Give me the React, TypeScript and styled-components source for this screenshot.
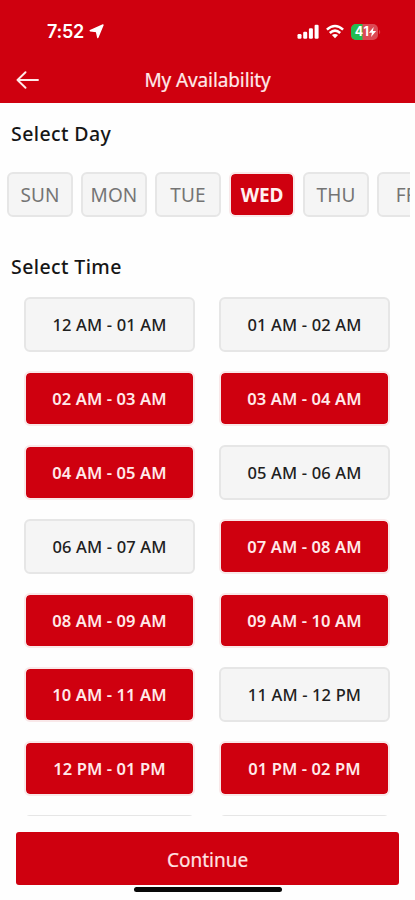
import React, { useState } from "react";
import styled, { createGlobalStyle } from "styled-components";

const RED = "#cf000f";

const GlobalStyle = createGlobalStyle`
  *, *::before, *::after { box-sizing: border-box; }
  body { margin: 0; background: #fff; }
  button { font: inherit; padding: 0; cursor: pointer; }
`;

const Screen = styled.div`
  display: flex;
  flex-direction: column;
  height: 900px;
  overflow: hidden;
  background: #fefefe;
  color: #161616;
  font-family: "Noto Sans", "Open Sans", sans-serif;
`;

const Header = styled.header`
  flex: none;
  height: 103px;
  background: ${RED};
  color: #fff;
`;

const StatusBar = styled.div`
  display: flex;
  justify-content: space-between;
  align-items: center;
  height: 57px;
  padding: 6px 34px 0 47px;
`;

const Clock = styled.div`
  display: flex;
  align-items: center;
  gap: 5px;
  font: 600 18px/20px Inter, sans-serif;
  letter-spacing: -0.25px;
`;

const StatusIcons = styled.div`
  display: flex;
  align-items: center;
  gap: 7px;
`;

const TitleBar = styled.div`
  display: grid;
  grid-template-columns: 40px 1fr 40px;
  align-items: center;
  height: 46px;
`;

const BackButton = styled.button`
  display: flex;
  justify-content: flex-start;
  padding-left: 16px;
  border: 0;
  background: none;
  color: #fff;
`;

const Title = styled.h1`
  margin: 0;
  font-size: 19px;
  line-height: 26px;
  font-weight: 400;
  letter-spacing: -0.1px;
  text-align: center;
  color: #ffe9e9;
  -webkit-text-stroke: 0.2px;
`;

const SectionTitle = styled.h2<{ $height: number; $offset?: number }>`
  flex: none;
  margin: 0;
  padding: ${(p) => p.$offset ?? 0}px 0 0 11px;
  height: ${(p) => p.$height}px;
  line-height: 62px;
  font-size: 19.5px;
  font-weight: 500;
  letter-spacing: 0.4px;
`;

const DayStrip = styled.div`
  flex: none;
  display: flex;
  gap: 8px;
  margin-right: 5px;
  padding-left: 7px;
  height: 45px;
  overflow: hidden;
`;

const Choice = styled.button<{ $active?: boolean }>`
  border: 2px solid ${(p) => (p.$active ? "#f9e8e9" : "#e6e6e6")};
  border-radius: 6px;
  background: ${(p) => (p.$active ? RED : "#f5f5f5")};
  background-clip: ${(p) => (p.$active ? "padding-box" : "border-box")};
`;

const DayButton = styled(Choice)`
  flex: none;
  width: 66px;
  height: 45px;
  font-size: 19px;
  font-weight: ${(p) => (p.$active ? 700 : 400)};
  letter-spacing: ${(p) => (p.$active ? "-0.2px" : "0.1px")};
  color: ${(p) => (p.$active ? "#fff0f0" : "#747474")};
`;

const SlotGrid = styled.div`
  flex: none;
  display: grid;
  grid-template-columns: 171px 171px;
  grid-auto-rows: 55px;
  column-gap: 24px;
  row-gap: 19px;
  height: 519px;
  padding-left: 24px;
  overflow: hidden;
`;

const SlotButton = styled(Choice)`
  font-size: 16.5px;
  font-weight: ${(p) => (p.$active ? 600 : 500)};
  letter-spacing: ${(p) => (p.$active ? "0.1px" : "0.15px")};
  color: ${(p) => (p.$active ? "#ffe9e9" : "#202020")};
`;

const Footer = styled.footer`
  display: flex;
  flex-direction: column;
  align-items: center;
  padding: 16px 16px 0;
`;

const ContinueButton = styled.button`
  width: 100%;
  height: 53px;
  padding-top: 2px;
  border: 0;
  border-radius: 3px;
  background: ${RED};
  color: #ffe3e3;
  font-size: 19px;
  font-weight: 400;
  -webkit-text-stroke: 0.2px;
`;

const HomeIndicator = styled.div`
  width: 148px;
  height: 5px;
  margin-top: 2px;
  border-radius: 3px;
  background: #080808;
`;

const LocationIcon = () => (
  <svg width="15" height="15" viewBox="0 0 15 15" aria-hidden="true">
    <path d="M14 1 8.8 13.6 7.5 7.5 1.2 6.7Z" fill="#fff" stroke="#fff" strokeWidth="1.4" strokeLinejoin="round" />
  </svg>
);

const BackIcon = () => (
  <svg width="24" height="18" viewBox="0 0 24 18" fill="none" stroke="#ffe9e9" strokeWidth="1.9" strokeLinecap="round" strokeLinejoin="round" aria-hidden="true">
    <path d="M22 9H1.5M9.5 1.2 1.5 9l8 7.8" />
  </svg>
);

const SignalIcon = () => (
  <svg width="22" height="15" viewBox="0 0 22 15" fill="#fff" aria-hidden="true">
    <rect x="0.5" y="10" width="4" height="4.7" rx="1.2" />
    <rect x="6.2" y="7.8" width="4" height="6.9" rx="1.2" />
    <rect x="11.9" y="4.3" width="4" height="10.4" rx="1.2" />
    <rect x="17.6" y="0.8" width="4" height="13.9" rx="1.2" />
  </svg>
);

const WifiIcon = () => (
  <svg width="18" height="15" viewBox="0 0 18 15" aria-hidden="true">
    <g fill="none" stroke="#fff" strokeWidth="2.5">
      <path d="M.9 5.7Q9-1.8 17.1 5.7" />
      <path d="M3.8 9Q9 4.2 14.2 9" />
    </g>
    <path d="M9 14.2 5.9 11.1Q9 8.9 12.1 11.1Z" fill="#fff" />
  </svg>
);

const BatteryIcon = () => (
  <svg width="30" height="16" viewBox="0 0 30 16" aria-label="41 percent, charging">
    <rect width="27" height="16" rx="5" fill="#dc4a54" />
    <path d="M5 0h6.5v16H5a5 5 0 0 1-5-5V5a5 5 0 0 1 5-5Z" fill="#22bd51" />
    <path d="M28.2 5.7q2 2.3 0 4.6Z" fill="#dc4a54" />
    <text x="3.8" y="12.4" fill="#fff" fontFamily="Inter, sans-serif" fontSize="12.5" fontWeight="700" textLength="14">41</text>
    <path d="m22.7 3-4.8 5.8h3l-.8 4.2 5-6.1h-3.2Z" fill="#fff" />
  </svg>
);

const days = ["SUN", "MON", "TUE", "WED", "THU", "FRI"];

const slots = [
  "12 AM - 01 AM", "01 AM - 02 AM",
  "02 AM - 03 AM", "03 AM - 04 AM",
  "04 AM - 05 AM", "05 AM - 06 AM",
  "06 AM - 07 AM", "07 AM - 08 AM",
  "08 AM - 09 AM", "09 AM - 10 AM",
  "10 AM - 11 AM", "11 AM - 12 PM",
  "12 PM - 01 PM", "01 PM - 02 PM",
];

export default function App() {
  const [day, setDay] = useState("WED");
  const [selected, setSelected] = useState(() => new Set([2, 3, 4, 7, 8, 9, 10, 12, 13]));

  const toggle = (index: number) =>
    setSelected((current) => {
      const next = new Set(current);
      if (!next.delete(index)) next.add(index);
      return next;
    });

  return (
    <Screen>
      <GlobalStyle />
      <Header>
        <StatusBar>
          <Clock>7:52<LocationIcon /></Clock>
          <StatusIcons>
            <SignalIcon />
            <WifiIcon />
            <BatteryIcon />
          </StatusIcons>
        </StatusBar>
        <TitleBar>
          <BackButton aria-label="Back"><BackIcon /></BackButton>
          <Title>My Availability</Title>
        </TitleBar>
      </Header>
      <SectionTitle $height={69}>Select Day</SectionTitle>
      <DayStrip>
        {days.map((name) => (
          <DayButton key={name} $active={name === day} onClick={() => setDay(name)}>{name}</DayButton>
        ))}
      </DayStrip>
      <SectionTitle $height={80} $offset={19}>Select Time</SectionTitle>
      <SlotGrid>
        {slots.map((label, index) => (
          <SlotButton key={label} $active={selected.has(index)} onClick={() => toggle(index)}>{label}</SlotButton>
        ))}
        <Choice aria-hidden="true" tabIndex={-1} />
        <Choice aria-hidden="true" tabIndex={-1} />
      </SlotGrid>
      <Footer>
        <ContinueButton>Continue</ContinueButton>
        <HomeIndicator />
      </Footer>
    </Screen>
  );
}
